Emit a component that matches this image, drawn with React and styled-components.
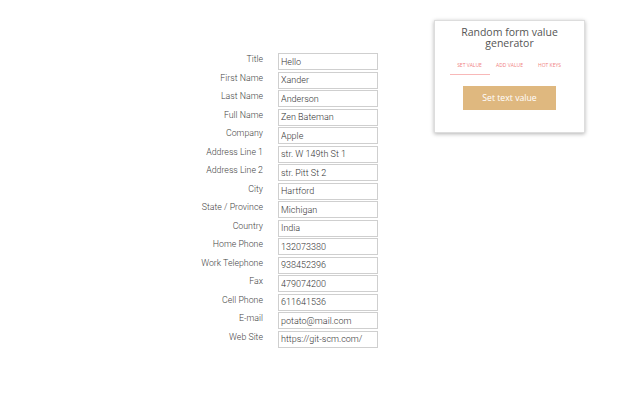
import React from 'react';
import styled, { createGlobalStyle } from 'styled-components';

const GlobalStyle = createGlobalStyle`
  body {
    margin: 0;
    background: #fff;
    font-family: Roboto, "Liberation Sans", sans-serif;
  }
`;

const Page = styled.div`
  display: flex;
  align-items: flex-start;
  padding-left: 163px;
  width: 640px;
  height: 400px;
  box-sizing: border-box;
`;

const Form = styled.div`
  display: grid;
  grid-template-columns: 100px 100px;
  column-gap: 15px;
  row-gap: 1.5px;
  margin-top: 53px;
`;

const Label = styled.label`
  font-size: 8.8px;
  font-weight: 300;
  color: #444;
  text-align: right;
  line-height: 13px;
`;

const Field = styled.input`
  box-sizing: border-box;
  width: 100px;
  height: 17px;
  margin: 0;
  padding: 0 2px;
  border: 1px solid #cfcfcf;
  font-family: Roboto, "Liberation Sans", sans-serif;
  font-size: 9px;
  font-weight: 300;
  color: #333;
  outline: none;
`;

const Card = styled.div`
  box-sizing: border-box;
  width: 151px;
  height: 113px;
  margin-top: 20px;
  margin-left: 56px;
  padding-top: 6px;
  border: 1px solid #ddd;
  box-shadow: 0 1px 4px rgba(0, 0, 0, 0.3);
  display: flex;
  flex-direction: column;
  align-items: center;
`;

const CardTitle = styled.div`
  font-family: "Open Sans", sans-serif;
  font-size: 10.5px;
  line-height: 11px;
  color: #555;
  text-align: center;
  width: 110px;
`;

const Tabs = styled.div`
  display: flex;
  margin-top: 10px;
`;

const Tab = styled.div`
  width: 40px;
  height: 16px;
  box-sizing: border-box;
  padding-top: 3px;
  text-align: center;
  font-family: "Open Sans", sans-serif;
  font-size: 5px;
  color: #f07f7f;
  border-bottom: 1.5px solid ${p => (p.$active ? '#f8b8b8' : 'transparent')};
`;

const Button = styled.div`
  width: 93px;
  height: 24px;
  margin-top: 11px;
  background: #dfb87f;
  color: #fff;
  font-family: "Open Sans", sans-serif;
  font-size: 8.7px;
  display: flex;
  align-items: center;
  justify-content: center;
`;

const fields = [
  ['Title', 'Hello'],
  ['First Name', 'Xander'],
  ['Last Name', 'Anderson'],
  ['Full Name', 'Zen Bateman'],
  ['Company', 'Apple'],
  ['Address Line 1', 'str. W 149th St 1'],
  ['Address Line 2', 'str. Pitt St 2'],
  ['City', 'Hartford'],
  ['State / Province', 'Michigan'],
  ['Country', 'India'],
  ['Home Phone', '132073380'],
  ['Work Telephone', '938452396'],
  ['Fax', '479074200'],
  ['Cell Phone', '611641536'],
  ['E-mail', 'potato@mail.com'],
  ['Web Site', 'https://git-scm.com/'],
];

const App = () => {
  return (
    <>
      <GlobalStyle />
      <Page>
        <Form>
          {fields.map(([label, value]) => (
            <React.Fragment key={label}>
              <Label>{label}</Label>
              <Field defaultValue={value} />
            </React.Fragment>
          ))}
        </Form>
        <Card>
          <CardTitle>Random form value generator</CardTitle>
          <Tabs>
            <Tab $active>SET VALUE</Tab>
            <Tab>ADD VALUE</Tab>
            <Tab>HOT KEYS</Tab>
          </Tabs>
          <Button>Set text value</Button>
        </Card>
      </Page>
    </>
  );
};

export default App;
